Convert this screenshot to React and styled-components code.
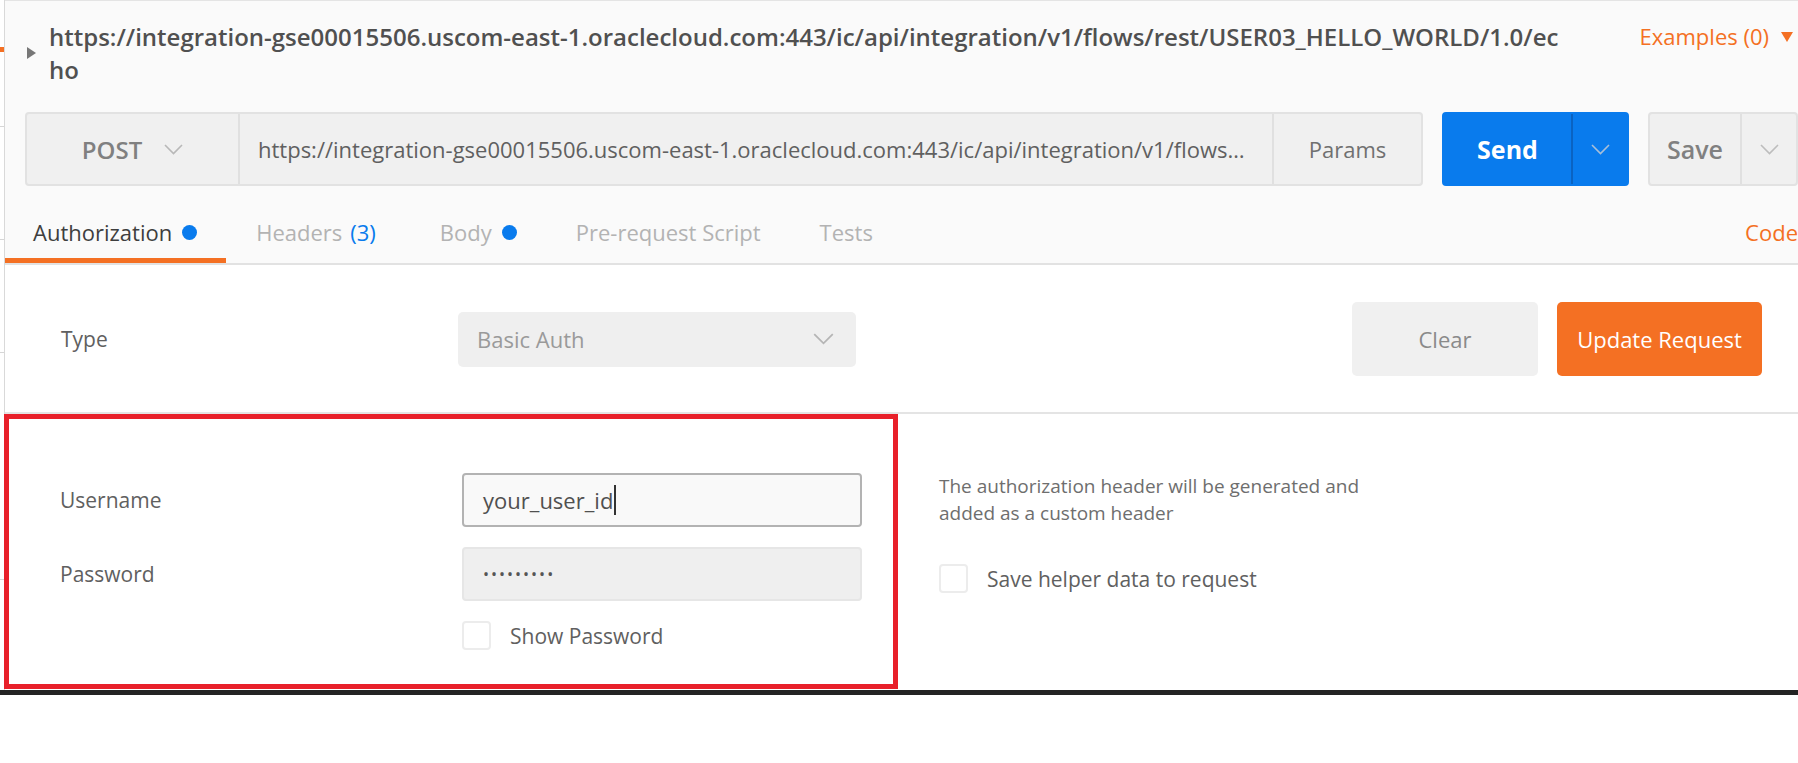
import React from "react";
import styled, { createGlobalStyle } from "styled-components";

const GlobalStyle = createGlobalStyle`
  html, body {
    margin: 0;
    padding: 0;
    background: #ffffff;
    font-family: "Open Sans", "Noto Sans", sans-serif;
    overflow: hidden;
  }
  * {
    box-sizing: border-box;
  }
`;

const Page = styled.div`
  width: 1798px;
  height: 763px;
  display: flex;
  flex-direction: column;
  background: #ffffff;
`;

const Workspace = styled.div`
  display: flex;
  height: 690px;
`;

const Sidebar = styled.div`
  width: 4px;
  display: flex;
  flex-direction: column;
  background: #ffffff;
`;

const SideItem = styled.div`
  height: ${(p) => p.$h}px;
  border-bottom: 1px solid #d6d6d6;
  display: flex;
  flex-direction: column;
  padding-top: 47px;
`;

const SideMark = styled.div`
  width: 4px;
  height: 5px;
  background: #f47023;
`;

const Panel = styled.div`
  flex: 1;
  display: flex;
  flex-direction: column;
  border-left: 1px solid #d9d9d9;
  min-width: 0;
`;

const Header = styled.div`
  background: #fafafa;
  border-top: 1px solid #e4e4e4;
`;

const TitleRow = styled.div`
  display: flex;
  align-items: flex-start;
  padding: 19px 0 0 22px;
`;

const TitleMain = styled.div`
  display: flex;
  align-items: center;
  gap: 13px;
`;

const Caret = styled.span`
  width: 0;
  height: 0;
  border-top: 6.5px solid transparent;
  border-bottom: 6.5px solid transparent;
  border-left: 9px solid #777;
`;

const Title = styled.div`
  width: 1522px;
  font-size: 24px;
  line-height: 33px;
  font-weight: 600;
  color: #505050;
  word-break: break-all;
`;

const Examples = styled.div`
  margin-left: auto;
  display: flex;
  align-items: center;
  gap: 12px;
  font-size: 22px;
  line-height: 33px;
  color: #f47023;
  padding-right: 5px;
`;

const DownTriangle = styled.span`
  width: 0;
  height: 0;
  border-left: 6.5px solid transparent;
  border-right: 6.5px solid transparent;
  border-top: 10px solid #f47023;
`;

const RequestBar = styled.div`
  display: flex;
  gap: 19px;
  height: 74px;
  margin-top: 26px;
  padding-left: 20px;
`;

const UrlGroup = styled.div`
  flex: 1;
  display: flex;
  background: #f0f0f0;
  border: 2px solid #e2e2e2;
  border-radius: 4px;
  min-width: 0;
`;

const Method = styled.div`
  width: 213px;
  flex-shrink: 0;
  display: flex;
  align-items: center;
  justify-content: center;
  gap: 22px;
  font-size: 24px;
  font-weight: 600;
  color: #808080;
  border-right: 2px solid #e0e0e0;
`;

const UrlText = styled.div`
  flex: 1;
  display: flex;
  align-items: center;
  padding: 0 24px 0 18px;
  font-size: 22px;
  color: #606060;
  white-space: nowrap;
  overflow: hidden;
  min-width: 0;
`;

const UrlInner = styled.span`
  overflow: hidden;
  text-overflow: ellipsis;
`;

const Params = styled.div`
  width: 149px;
  flex-shrink: 0;
  display: flex;
  align-items: center;
  justify-content: center;
  font-size: 22px;
  color: #707070;
  border-left: 2px solid #e0e0e0;
`;

const SplitButton = styled.div`
  display: flex;
  flex-shrink: 0;
  border-radius: 4px;
  background: ${(p) => (p.$primary ? "#097bed" : "#f0f0f0")};
  border: 2px solid ${(p) => (p.$primary ? "#097bed" : "#e2e2e2")};
`;

const SplitMain = styled.div`
  width: ${(p) => p.$w}px;
  display: flex;
  align-items: center;
  justify-content: center;
  font-size: 25px;
  font-weight: ${(p) => (p.$primary ? 700 : 600)};
  color: ${(p) => (p.$primary ? "#ffffff" : "#808080")};
`;

const SplitDrop = styled.div`
  width: 56px;
  display: flex;
  align-items: center;
  justify-content: center;
  border-left: 2px solid ${(p) => (p.$primary ? "#0a63c2" : "#e0e0e0")};
`;

const Tabs = styled.div`
  display: flex;
  align-items: stretch;
  margin-top: 20px;
  border-bottom: 2px solid #e2e2e2;
`;

const Tab = styled.div`
  height: 57px;
  display: flex;
  align-items: center;
  padding: 0 29px 0 ${(p) => (p.$active ? 28 : 30)}px;
  margin-right: ${(p) => p.$mr || 0}px;
  font-size: 22px;
  color: ${(p) => (p.$active ? "#3e3e3e" : "#b3b3b3")};
  border-bottom: 5px solid ${(p) => (p.$active ? "#f47023" : "transparent")};
  white-space: nowrap;
`;

const Count = styled.span`
  color: #097bed;
  margin-left: 8px;
`;

const Dot = styled.span`
  width: 15px;
  height: 15px;
  border-radius: 50%;
  background: #097bed;
  margin-left: 10px;
`;

const CodeLink = styled.div`
  margin-left: auto;
  display: flex;
  align-items: center;
  font-size: 22px;
  color: #f47023;
  padding-bottom: 5px;
`;

const Body = styled.div`
  flex: 1;
  display: flex;
  flex-direction: column;
  background: #ffffff;
`;

const TypeRow = styled.div`
  display: flex;
  align-items: center;
  padding: 37px 36px 36px 56px;
  border-bottom: 2px solid #e4e4e4;
`;

const FieldLabel = styled.div`
  width: ${(p) => p.$w}px;
  flex-shrink: 0;
  font-size: 21px;
  color: #606060;
`;

const Select = styled.div`
  width: 398px;
  height: 55px;
  display: flex;
  align-items: center;
  justify-content: space-between;
  padding: 0 22px 0 19px;
  background: #efefef;
  border-radius: 5px;
  font-size: 22px;
  color: #9a9a9a;
`;

const Actions = styled.div`
  margin-left: auto;
  display: flex;
  gap: 19px;
`;

const ActionButton = styled.div`
  width: ${(p) => p.$w}px;
  height: 74px;
  display: flex;
  align-items: center;
  justify-content: center;
  border-radius: 5px;
  font-size: 22px;
  background: ${(p) => (p.$primary ? "#f47023" : "#f0f0f0")};
  color: ${(p) => (p.$primary ? "#ffffff" : "#8a8a8a")};
`;

const CredRow = styled.div`
  display: flex;
  align-items: flex-start;
`;

const Highlight = styled.div`
  width: 894px;
  margin-left: -1px;
  border: 5px solid #e8202a;
  padding: 54px 30px 34px 51px;
  display: flex;
  flex-direction: column;
  gap: 20px;
`;

const FormRow = styled.div`
  display: flex;
  align-items: center;
`;

const TextInput = styled.div`
  width: 400px;
  height: 54px;
  display: flex;
  align-items: center;
  padding-left: 19px;
  border-radius: 4px;
  border: 2px solid ${(p) => (p.$focused ? "#b3b3b3" : "#e6e6e6")};
  background: ${(p) => (p.$focused ? "#f9f9f9" : "#efefef")};
  font-size: 22px;
  color: #505050;
`;

const TextCaret = styled.span`
  width: 0;
  height: 30px;
  border-left: 2px solid #333;
  margin-left: 1px;
`;

const Dots = styled.span`
  font-size: 16px;
  letter-spacing: 2px;
  color: #555;
`;

const CheckRow = styled.div`
  display: flex;
  align-items: center;
  gap: 19px;
  margin-left: ${(p) => p.$ml || 0}px;
  font-size: 21px;
  color: #606060;
`;

const Checkbox = styled.span`
  width: 29px;
  height: 29px;
  border: 2px solid #ececec;
  border-radius: 4px;
  background: #ffffff;
`;

const Helper = styled.div`
  margin-left: 41px;
  padding-top: 59px;
  display: flex;
  flex-direction: column;
  gap: 37px;
`;

const HelperText = styled.div`
  width: 420px;
  font-size: 19px;
  line-height: 27px;
  color: #6e6e6e;
`;

const BottomBar = styled.div`
  height: 5px;
  background: #232323;
`;

const Chevron = ({ color = "#b0b0b0", w = 19, h = 11 }) => (
  <svg width={w} height={h} viewBox="0 0 19 11" fill="none">
    <path d="M1 1 L9.5 9.5 L18 1" stroke={color} strokeWidth="1.6" />
  </svg>
);

const URL =
  "https://integration-gse00015506.uscom-east-1.oraclecloud.com:443/ic/api/integration/v1/flows/rest/USER03_HELLO_WORLD/1.0/echo";

export default function App() {
  return (
    <Page>
      <GlobalStyle />
      <Workspace>
        <Sidebar>
          <SideItem $h={127}>
            <SideMark />
          </SideItem>
          <SideItem $h={113} />
          <SideItem $h={113} />
          <SideItem $h={227} />
        </Sidebar>
        <Panel>
          <Header>
            <TitleRow>
              <TitleMain>
                <Caret />
                <Title>{URL}</Title>
              </TitleMain>
              <Examples>
                Examples (0) <DownTriangle />
              </Examples>
            </TitleRow>
            <RequestBar>
              <UrlGroup>
                <Method>
                  POST <Chevron color="#b8b8b8" />
                </Method>
                <UrlText>
                  <UrlInner>{URL}</UrlInner>
                </UrlText>
                <Params>Params</Params>
              </UrlGroup>
              <SplitButton $primary>
                <SplitMain $primary $w={127}>
                  Send
                </SplitMain>
                <SplitDrop $primary>
                  <Chevron color="#a9bfd8" />
                </SplitDrop>
              </SplitButton>
              <SplitButton>
                <SplitMain $w={90}>Save</SplitMain>
                <SplitDrop>
                  <Chevron color="#bdbdbd" />
                </SplitDrop>
              </SplitButton>
            </RequestBar>
            <Tabs>
              <Tab $active>
                Authorization <Dot />
              </Tab>
              <Tab $mr={5}>
                Headers <Count>(3)</Count>
              </Tab>
              <Tab>
                Body <Dot />
              </Tab>
              <Tab>Pre-request Script</Tab>
              <Tab>Tests</Tab>
              <CodeLink>Code</CodeLink>
            </Tabs>
          </Header>
          <Body>
            <TypeRow>
              <FieldLabel $w={397}>Type</FieldLabel>
              <Select>
                Basic Auth <Chevron color="#b5b5b5" w={21} h={12} />
              </Select>
              <Actions>
                <ActionButton $w={186}>Clear</ActionButton>
                <ActionButton $primary $w={205}>
                  Update Request
                </ActionButton>
              </Actions>
            </TypeRow>
            <CredRow>
              <Highlight>
                <FormRow>
                  <FieldLabel $w={402}>Username</FieldLabel>
                  <TextInput $focused>
                    your_user_id
                    <TextCaret />
                  </TextInput>
                </FormRow>
                <FormRow>
                  <FieldLabel $w={402}>Password</FieldLabel>
                  <TextInput>
                    <Dots>•••••••••</Dots>
                  </TextInput>
                </FormRow>
                <CheckRow $ml={402}>
                  <Checkbox />
                  Show Password
                </CheckRow>
              </Highlight>
              <Helper>
                <HelperText>
                  The authorization header will be generated and added as a
                  custom header
                </HelperText>
                <CheckRow>
                  <Checkbox />
                  Save helper data to request
                </CheckRow>
              </Helper>
            </CredRow>
          </Body>
        </Panel>
      </Workspace>
      <BottomBar />
    </Page>
  );
}
